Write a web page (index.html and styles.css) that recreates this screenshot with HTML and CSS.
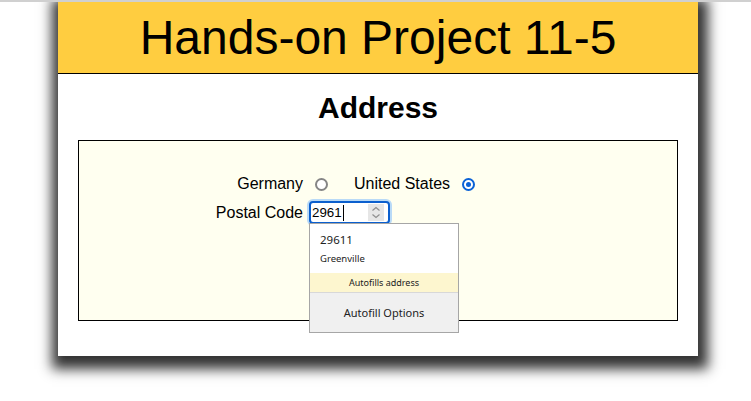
FILE: index.html
```html
<!DOCTYPE html>
<html lang="en">
<head>
<meta charset="utf-8">
<title>Hands-on Project 11-5</title>
<link rel="stylesheet" href="styles.css">
</head>
<body>
<div class="page">
  <header class="banner">
    <h1>Hands-on Project 11-5</h1>
  </header>
  <article class="content">
    <h2>Address</h2>
    <form class="box">
      <div class="row row-country">
        <span class="label">Germany</span>
        <span class="radio"></span>
        <span class="country">United States</span>
        <span class="radio checked"></span>
      </div>
      <div class="row row-postal">
        <span class="label">Postal Code</span>
        <div class="field">
          <span class="value">2961</span><span class="caret"></span>
          <span class="spinner">
            <svg width="16" height="17" viewBox="0 0 16 17">
              <path d="M4.5 6.5 L8 3.5 L11.5 6.5" fill="none" stroke="#8e8e8e" stroke-width="1.2"/>
              <path d="M4.5 10.5 L8 13.5 L11.5 10.5" fill="none" stroke="#8e8e8e" stroke-width="1.2"/>
            </svg>
          </span>
          <div class="autofill">
            <div class="af-suggestion">
              <div class="af-main">29611</div>
              <div class="af-sub">Greenville</div>
            </div>
            <div class="af-note">Autofills address</div>
            <div class="af-options">Autofill Options</div>
          </div>
        </div>
      </div>
    </form>
  </article>
</div>
</body>
</html>
```
FILE: styles.css
```css
html, body {
  margin: 0;
  background: #fff;
}
body {
  padding-left: 5px;
  border-top: 2px solid #d0d0d0;
  min-height: calc(100vh - 2px);
  font-family: "Liberation Sans", Arial, sans-serif;
}
.page {
  width: 640px;
  margin: 0 auto;
  background: #fff;
  box-shadow: 2px 5px 12px 8px #333;
}
.banner {
  background: #ffcd40;
  border-bottom: 1px solid #000;
  height: 71px;
}
.banner h1 {
  margin: 0;
  font-size: 48px;
  font-weight: normal;
  line-height: 71px;
  text-align: center;
  color: #000;
}
.content {
  padding: 0 20px 35px;
}
.content h2 {
  margin: 17px 0 15px;
  font-size: 30px;
  line-height: 34px;
  font-weight: bold;
  text-align: center;
}
.box {
  box-sizing: border-box;
  height: 181px;
  border: 1px solid #000;
  background: #fffff0;
  padding-top: 33px;
  font-size: 16px;
  color: #000;
}
.row {
  display: flex;
  align-items: center;
}
.row-country {
  height: 20px;
  line-height: 20px;
}
.row-postal {
  margin-top: 7px;
}
.label {
  width: 224px;
  text-align: right;
}
.radio {
  box-sizing: border-box;
  width: 13px;
  height: 13px;
  border: 2px solid #858585;
  border-radius: 50%;
  background: #fff;
  margin-left: 12px;
  position: relative;
}
.radio.checked {
  border-color: #0b62d6;
  margin-left: 12px;
}
.radio.checked::after {
  content: "";
  position: absolute;
  left: 2px;
  top: 2px;
  width: 5px;
  height: 5px;
  border-radius: 50%;
  background: #0b62d6;
}
.country {
  margin-left: 26px;
}
.field {
  position: relative;
  box-sizing: border-box;
  width: 81px;
  height: 23px;
  margin-left: 6px;
  border: 2px solid #0b5fce;
  border-radius: 4px;
  box-shadow: 0 0 0 2px #b9daf7;
  background: #fff;
  display: flex;
  align-items: center;
  padding-left: 1px;
  font-size: 13.33px;
}
.value {
  line-height: 16px;
}
.caret {
  width: 1px;
  height: 16px;
  background: #000;
  margin-left: 1px;
}
.spinner {
  margin-left: auto;
  margin-right: 4px;
  width: 16px;
  height: 17px;
  background: #e6e6e6;
  display: flex;
}
.autofill {
  position: absolute;
  left: -2px;
  top: 20px;
  z-index: 2;
  box-sizing: border-box;
  width: 150px;
  border: 1px solid #a6a6a6;
  background: #fff;
  font-family: "Noto Sans", "Open Sans", sans-serif;
  color: #222;
}
.af-suggestion {
  height: 49px;
  box-sizing: border-box;
  padding: 8px 0 0 10px;
}
.af-main {
  font-size: 11.5px;
  line-height: 16px;
}
.af-sub {
  margin-top: 4px;
  font-size: 9.5px;
  line-height: 14px;
}
.af-note {
  height: 19px;
  line-height: 19px;
  background: #fdf6cf;
  border-bottom: 1px solid #d8d8d8;
  font-size: 9px;
  text-align: center;
}
.af-options {
  height: 39px;
  line-height: 40px;
  background: #f0f0f0;
  font-size: 11px;
  text-align: center;
}
```
